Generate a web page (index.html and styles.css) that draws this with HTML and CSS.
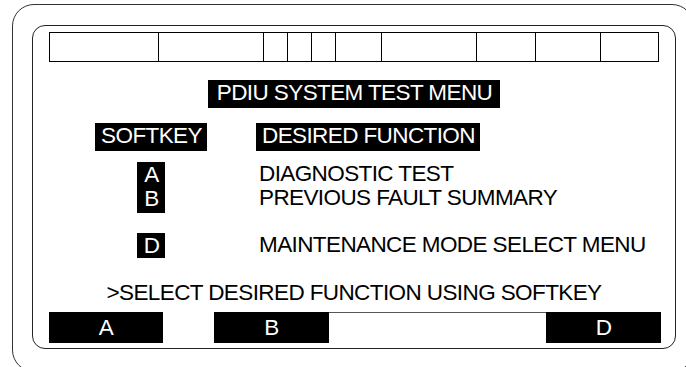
FILE: index.html
```html
<!DOCTYPE html>
<html lang="en">
<head>
  <meta charset="UTF-8">
  <title>PDIU System Test Menu</title>
  <link rel="stylesheet" href="styles.css">
</head>
<body>
  <div class="bezel">
    <div class="screen">
      <div class="status-row">
        <div class="cell"></div>
        <div class="cell"></div>
        <div class="cell"></div>
        <div class="cell"></div>
        <div class="cell"></div>
        <div class="cell"></div>
        <div class="cell"></div>
        <div class="cell"></div>
        <div class="cell"></div>
        <div class="cell"></div>
      </div>

      <div class="title-wrap">
        <span class="inv title">PDIU SYSTEM TEST MENU</span>
      </div>

      <div class="menu">
        <div class="key-col"><span class="inv head">SOFTKEY</span></div>
        <div class="fn-col"><span class="inv head">DESIRED FUNCTION</span></div>

        <div class="key-col row-ab"><span class="inv key">A<br>B</span></div>
        <div class="fn-col row-ab">DIAGNOSTIC TEST<br>PREVIOUS FAULT SUMMARY</div>

        <div class="key-col row-d"><span class="inv key">D</span></div>
        <div class="fn-col row-d">MAINTENANCE MODE SELECT MENU</div>
      </div>

      <div class="prompt">&gt;SELECT DESIRED FUNCTION USING SOFTKEY</div>

      <div class="softkeys">
        <div class="sk">A</div>
        <div class="sk-gap"></div>
        <div class="sk">B</div>
        <div class="sk-gap line"></div>
        <div class="sk">D</div>
      </div>
    </div>
  </div>
</body>
</html>
```

FILE: styles.css
```css
/* PDIU display page */
html, body {
  margin: 0;
  padding: 0;
  background: #fff;
  overflow: hidden;
}
body {
  font-family: "Liberation Sans", Arial, sans-serif;
  font-size: 22.5px;
  letter-spacing: -0.6px;
  color: #000;
}
.bezel {
  box-sizing: border-box;
  margin: 4px 0 0 12px;
  width: 682px;
  height: 368px;
  padding: 20px 0 0 19px;
  border: 1px solid #333;
  border-radius: 22px;
}
.screen {
  box-sizing: border-box;
  width: 644px;
  padding: 6px 0 5px 16px;
  border: 1px solid #222;
  border-radius: 13px;
}
.status-row {
  box-sizing: border-box;
  display: grid;
  grid-template-columns: 109px 105px 24px 24px 24px 46px 95px 59px 65px 58px;
  width: 610px;
  height: 30px;
  border: 1px solid #000;
  border-right: none;
}
.cell {
  border-right: 1px solid #000;
}
.inv {
  display: inline-block;
  background: #000;
  color: #fff;
  line-height: 24px;
}
.title-wrap {
  margin-top: 18px;
  margin-left: -16px;
  text-align: center;
}
.title {
  padding: 1px 8px 3px 9px;
}
.menu {
  display: grid;
  grid-template-columns: 112px 1fr;
  column-gap: 49px;
  margin-top: 15px;
  padding-left: 46px;
  line-height: 24px;
}
.key-col {
  text-align: center;
}
.head {
  padding: 1px 5px 3px 6px;
}
.fn-col.row-ab,
.fn-col.row-d {
  padding-left: 3px;
}
.row-ab {
  margin-top: 11px;
}
.row-d {
  margin-top: 20px;
}
.key {
  padding: 1px 6px 2px 7px;
  text-align: center;
}
.row-d .key {
  padding: 1px 6px 0 7px;
}
.prompt {
  margin: 23px 0 0 -16px;
  line-height: 24px;
  text-align: center;
}
.softkeys {
  display: grid;
  grid-template-columns: 114px 51px 115px 217px 115px;
  margin-top: 7px;
  height: 31px;
}
.sk {
  background: #000;
  color: #fff;
  line-height: 31px;
  text-align: center;
}
.sk-gap.line {
  border-top: 1px solid #555;
}
```
